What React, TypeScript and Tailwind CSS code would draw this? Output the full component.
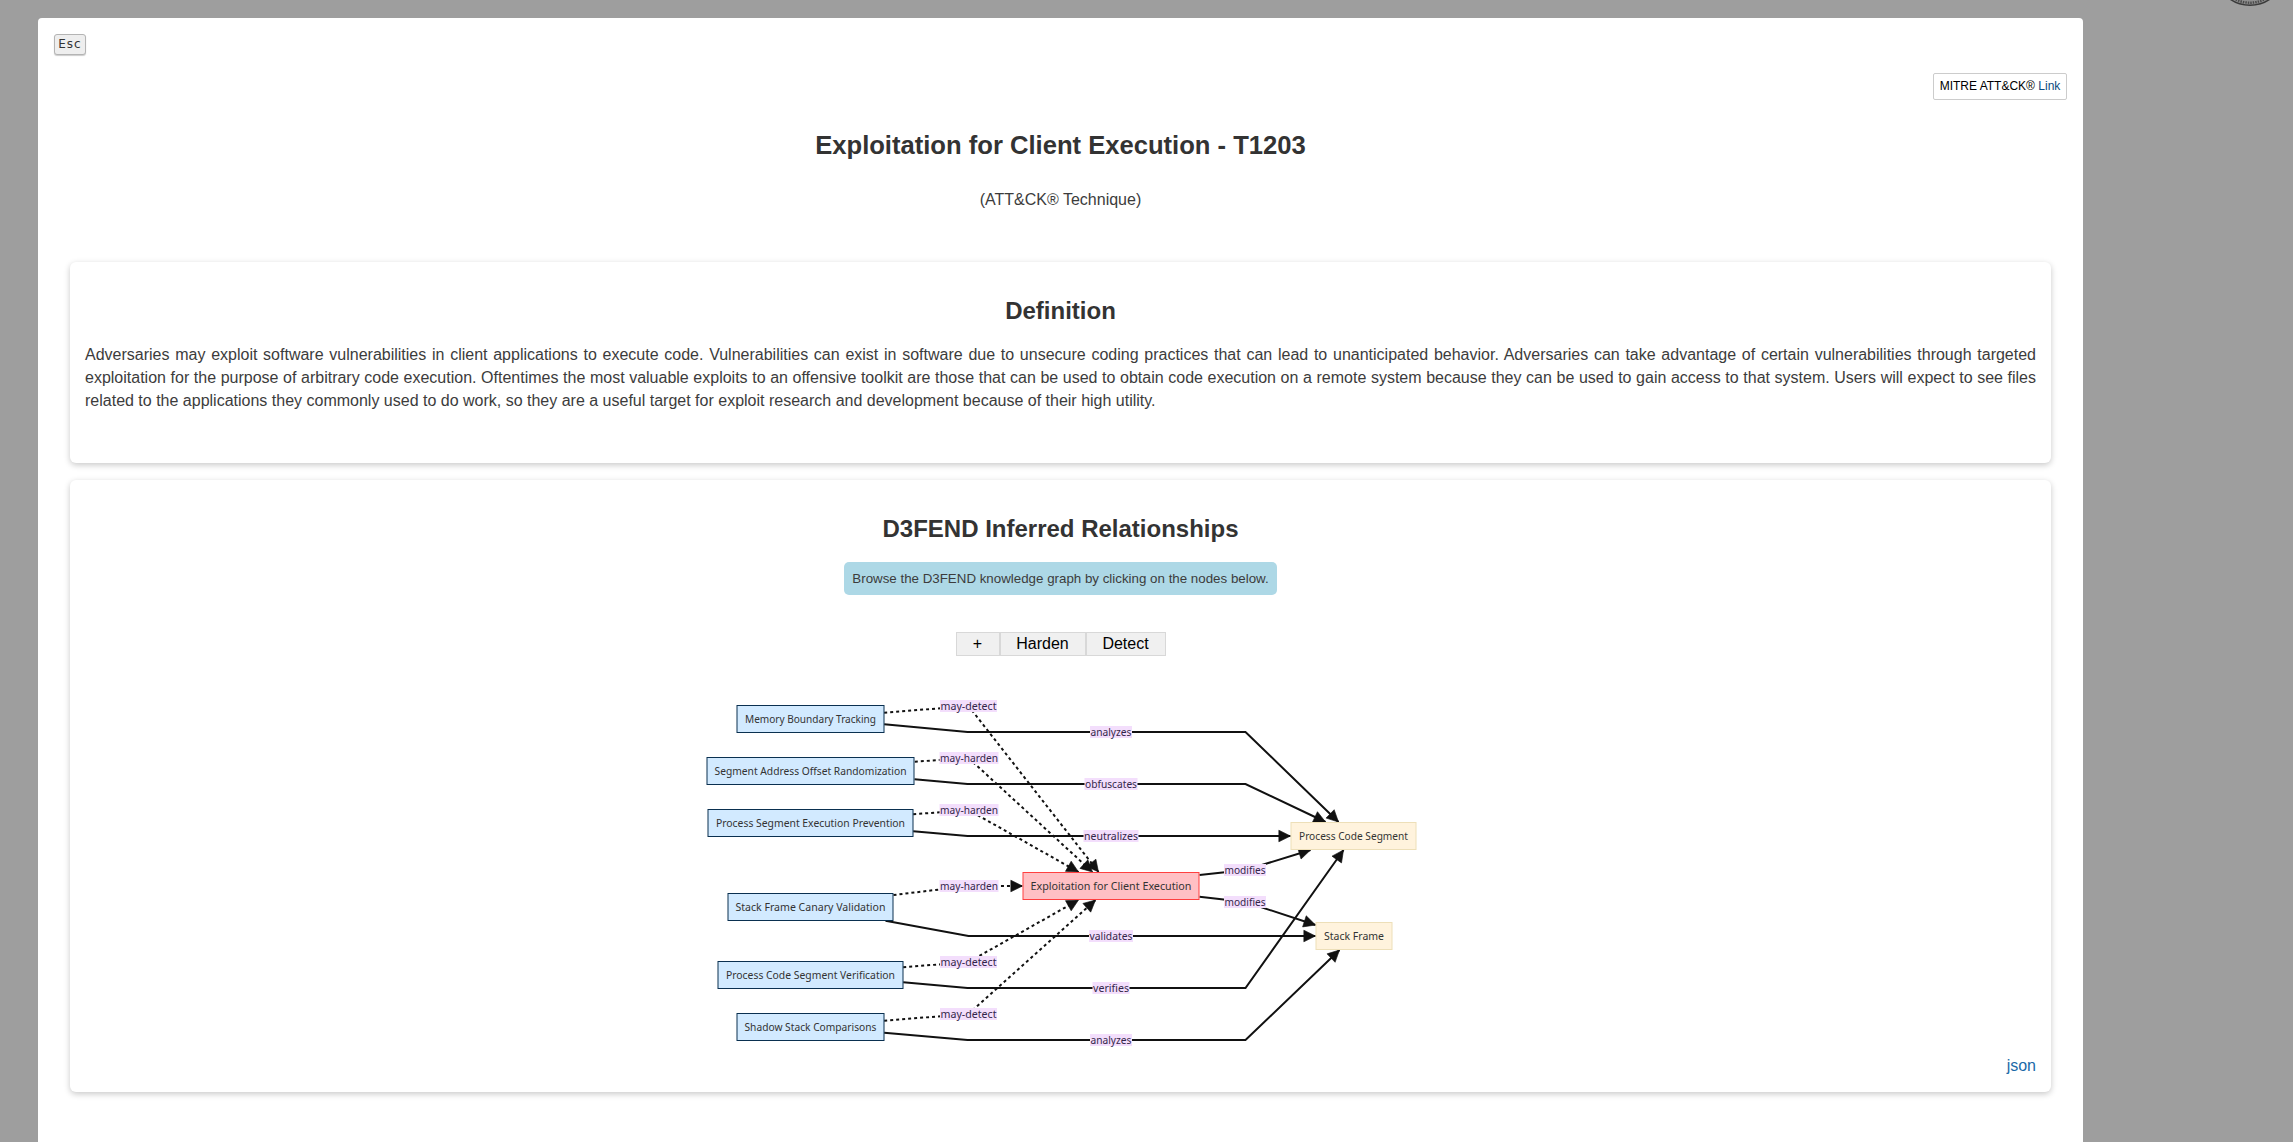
const sans = "font-['Liberation_Sans',Arial,sans-serif]";

interface GraphNode {
  label: string;
  x: number;
  y: number;
  w: number;
  h: number;
  kind: "defense" | "attack" | "artifact";
  textW: number;
}

const nodes: GraphNode[] = [
  { label: "Memory Boundary Tracking", x: 736.5, y: 705.5, w: 147, h: 27, kind: "defense", textW: 131 },
  { label: "Segment Address Offset Randomization", x: 706.5, y: 757.5, w: 207, h: 27, kind: "defense", textW: 192 },
  { label: "Process Segment Execution Prevention", x: 707.5, y: 809.5, w: 205, h: 27, kind: "defense", textW: 189 },
  { label: "Stack Frame Canary Validation", x: 727.5, y: 893.5, w: 165, h: 27, kind: "defense", textW: 150 },
  { label: "Process Code Segment Verification", x: 717.5, y: 961.5, w: 185, h: 27, kind: "defense", textW: 169 },
  { label: "Shadow Stack Comparisons", x: 736.5, y: 1013.5, w: 147, h: 27, kind: "defense", textW: 132 },
  { label: "Exploitation for Client Execution", x: 1022.5, y: 872.5, w: 176, h: 27, kind: "attack", textW: 161 },
  { label: "Process Code Segment", x: 1290.5, y: 822.5, w: 125, h: 27, kind: "artifact", textW: 109 },
  { label: "Stack Frame", x: 1315.5, y: 922.5, w: 76, h: 27, kind: "artifact", textW: 60 },
];

const nodeColors = {
  defense: "fill-[#d2eaff] stroke-[#0a3050]",
  attack: "fill-[#ffc0c4] stroke-[#ff4040]",
  artifact: "fill-[#fff3dd] stroke-[#eddfb8]",
};

const solidEdges = [
  "M883.7 724.3 L967 732 L1245 732 L1338 822",
  "M914 779.3 L967 784 L1245 784 L1325 822",
  "M912.7 831.3 L967 836 L1290 836",
  "M1199 875 L1245 870 L1310 850",
  "M1199 896.7 L1245 902 L1315 925",
  "M885 920.7 L968 936 L1315 936",
  "M902.7 982.3 L967 988 L1245 988 L1343 850",
  "M883.7 1032.7 L967 1040 L1245 1040 L1339 950",
];

const dottedEdges = [
  "M883.7 712.7 L968 706 L1098 872",
  "M914.3 761.7 L968 758 L1092 872",
  "M912.7 814.3 L968 810 L1078 872",
  "M893 895 L968 886 L1022 886",
  "M902.7 967.3 L968 962 L1078 900",
  "M883.7 1020.7 L968 1014 L1095 900",
];

const edgeLabels = [
  { text: "may-detect", x: 968, y: 706, w: 57 },
  { text: "may-harden", x: 968.5, y: 758, w: 59 },
  { text: "may-harden", x: 968.5, y: 810, w: 59 },
  { text: "may-harden", x: 968.5, y: 886, w: 59 },
  { text: "may-detect", x: 968, y: 962, w: 57 },
  { text: "may-detect", x: 968, y: 1014, w: 57 },
  { text: "analyzes", x: 1110.5, y: 732, w: 42 },
  { text: "obfuscates", x: 1110.5, y: 784, w: 53 },
  { text: "neutralizes", x: 1110.5, y: 836, w: 55 },
  { text: "validates", x: 1110.5, y: 936, w: 44 },
  { text: "verifies", x: 1110.5, y: 988, w: 37 },
  { text: "analyzes", x: 1110.5, y: 1040, w: 42 },
  { text: "modifies", x: 1244.5, y: 870, w: 42 },
  { text: "modifies", x: 1244.5, y: 902, w: 42 },
];

function KnowledgeGraph() {
  return (
    <svg viewBox="700.5 695 720 355" className="block w-[720px] h-[355px] mx-auto mt-[39px]">
      <defs>
        <marker
          id="arrow"
          viewBox="-1 -1 12 12"
          refX="10"
          refY="5"
          markerUnits="userSpaceOnUse"
          markerWidth="14"
          markerHeight="14"
          orient="auto"
        >
          <path d="M0 0 L10 5 L0 10 z" fill="#111111" stroke="#111111" strokeWidth="0.5" />
        </marker>
      </defs>

      {solidEdges.map((d) => (
        <path key={d} d={d} fill="none" stroke="#111111" strokeWidth="2" markerEnd="url(#arrow)" />
      ))}
      {dottedEdges.map((d) => (
        <path key={d} d={d} fill="none" stroke="#111111" strokeWidth="2" strokeDasharray="3" markerEnd="url(#arrow)" />
      ))}

      {nodes.map((n) => (
        <g key={n.label}>
          <rect x={n.x} y={n.y} width={n.w} height={n.h} strokeWidth="1" className={nodeColors[n.kind]} />
          <text
            x={n.x + n.w / 2}
            y={n.y + n.h / 2 + 4}
            textAnchor="middle"
            textLength={n.textW}
            lengthAdjust="spacingAndGlyphs"
            className="fill-[#333333] text-[11.5px] font-['Noto_Sans',sans-serif]"
          >
            {n.label}
          </text>
        </g>
      ))}

      {edgeLabels.map((l) => (
        <g key={`${l.text}-${l.y}`}>
          <rect x={l.x - l.w / 2} y={l.y - 6} width={l.w} height="12" className="fill-[#f3defc]" />
          <text
            x={l.x}
            y={l.y + 4}
            textAnchor="middle"
            textLength={l.w - 1}
            lengthAdjust="spacingAndGlyphs"
            className="fill-[#33264a] text-[11.5px] font-['Noto_Sans',sans-serif]"
          >
            {l.text}
          </text>
        </g>
      ))}
    </svg>
  );
}

export default function App() {
  return (
    <div className={`relative h-[1142px] overflow-hidden bg-[#9e9e9e] pt-[18px] pl-[38px] ${sans}`}>
      {/* seal cut off by the top edge */}
      <svg className="absolute left-[2226px] top-0 w-[48px] h-[8px]" viewBox="0 0 48 8">
        <circle cx="24" cy="-30.3" r="35.5" fill="#8f8f8f" stroke="#3a3a3a" strokeWidth="1.5" />
        <circle cx="24" cy="-30.3" r="33" fill="none" stroke="#4a4a4a" strokeWidth="2.5" strokeDasharray="1.5 1" />
      </svg>

      <div className="w-[2045px] h-[1124px] bg-white rounded-t-[4px] text-[#333333]">
        <div className="pt-4 pl-4">
          <kbd className="block w-[32px] h-[21px] bg-[#eeeeee] border border-[#b4b4b4] rounded-[3px] shadow-[0_1px_1px_rgba(0,0,0,0.2)] text-center text-[12px] leading-[19px] tracking-[1px] font-['DejaVu_Sans',sans-serif]">
            Esc
          </kbd>
        </div>

        <div className="flex justify-end pr-4 mt-[18px]">
          <a className="block w-[134px] h-[27px] border border-[#cccccc] rounded-[2px] text-center text-[12px] leading-[25px] text-black whitespace-nowrap">
            MITRE ATT&amp;CK® <span className="text-[#0a4a80]">Link</span>
          </a>
        </div>

        <h1 className="mt-[28px] text-center text-[25.6px] leading-[34px] font-bold">
          Exploitation for Client Execution - T1203
        </h1>
        <p className="mt-[26px] text-center text-[16px] leading-[24px] text-[#3c3c3c]">(ATT&amp;CK® Technique)</p>

        <section className="mx-[32px] mt-[50px] h-[201px] rounded-[6px] bg-white px-[15px] pt-[34px] shadow-[0_2px_6px_rgba(0,0,0,0.22)]">
          <h2 className="text-center text-[24px] leading-[30px] font-bold">Definition</h2>
          <p className="mt-[17px] text-justify text-[16px] leading-[23px] text-[#3c3c3c]">
            Adversaries may exploit software vulnerabilities in client applications to execute code. Vulnerabilities can exist in software due to unsecure coding practices that can lead to unanticipated behavior. Adversaries can take advantage of certain vulnerabilities through targeted exploitation for the purpose of arbitrary code execution. Oftentimes the most valuable exploits to an offensive toolkit are those that can be used to obtain code execution on a remote system because they can be used to gain access to that system. Users will expect to see files related to the applications they commonly used to do work, so they are a useful target for exploit research and development because of their high utility.
          </p>
        </section>

        <section className="mx-[32px] mt-[17px] h-[612px] rounded-[6px] bg-white pt-[34px] shadow-[0_2px_6px_rgba(0,0,0,0.22)]">
          <h2 className="text-center text-[24px] leading-[30px] font-bold">D3FEND Inferred Relationships</h2>
          <div className="mt-[18px] mx-auto w-[433px] h-[33px] rounded-[5px] bg-[#add8e6] text-center text-[13.33px] leading-[33px] whitespace-nowrap text-[#3c3c3c]">
            Browse the D3FEND knowledge graph by clicking on the nodes below.
          </div>
          <div className="mt-[37px] flex justify-center text-[16px] leading-[22px] text-black">
            <button className="w-[44px] h-[24px] bg-[#f0f0f0] border border-[#d8d8d8]">+</button>
            <button className="w-[86px] h-[24px] bg-[#f0f0f0] border border-[#d8d8d8]">Harden</button>
            <button className="w-[80px] h-[24px] bg-[#f0f0f0] border border-[#d8d8d8]">Detect</button>
          </div>
          <KnowledgeGraph />
          <div className="mt-[6px] pr-[15px] text-right text-[16px] leading-[20px] text-[#1b6aa8]">json</div>
        </section>
      </div>
    </div>
  );
}
